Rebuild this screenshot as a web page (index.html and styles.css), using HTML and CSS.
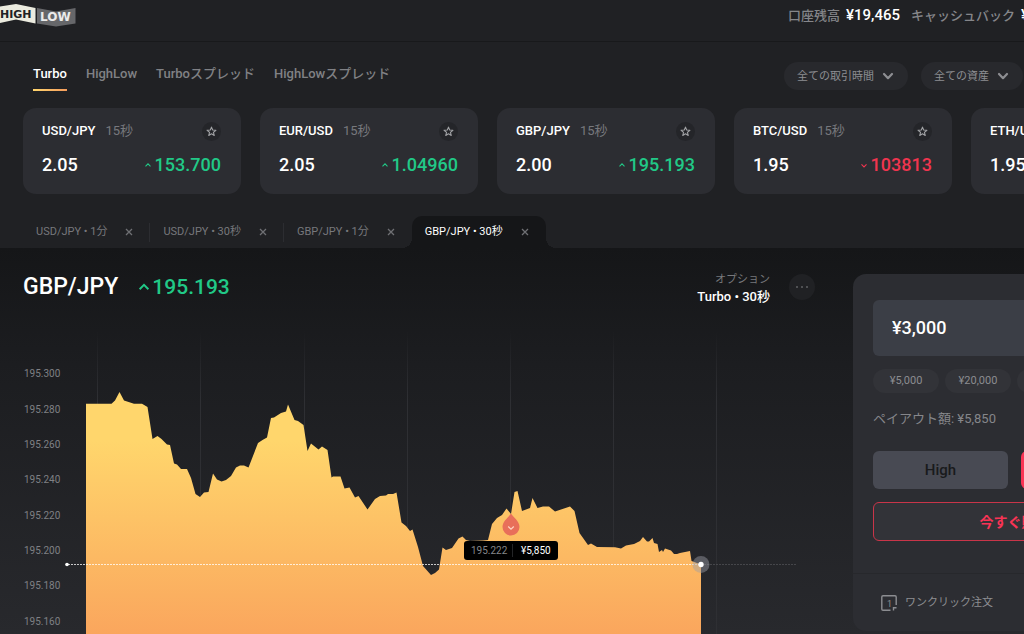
FILE: index.html
```html
<!DOCTYPE html>
<html lang="ja">
<head>
<meta charset="utf-8">
<meta name="viewport" content="width=device-width, initial-scale=1">
<title>HighLow</title>
<link rel="stylesheet" href="styles.css">
</head>
<body>
<svg class="sprite" aria-hidden="true">
  <symbol id="star" viewBox="0 0 12 12"><path d="M6 1.2 7.3 4.3 10.8 4.6 8.1 6.9 9 10.3 6 8.5 3 10.3 3.9 6.9 1.2 4.6 4.7 4.3Z" fill="none" stroke="currentColor" stroke-width="1.2" stroke-linejoin="round"/></symbol>
  <symbol id="up" viewBox="0 0 8 8"><path d="M1.5 5.3 4 2.8 6.5 5.3" fill="none" stroke="currentColor" stroke-width="1.1"/></symbol>
  <symbol id="down" viewBox="0 0 8 8"><path d="M1.5 3.4 4 5.9 6.5 3.4" fill="none" stroke="currentColor" stroke-width="1.1"/></symbol>
  <symbol id="close" viewBox="0 0 8 8"><path d="M1 1 7 7M7 1 1 7" fill="none" stroke="currentColor" stroke-width="1.3"/></symbol>
  <symbol id="chevron" viewBox="0 0 12 12"><path d="M2 4 6 8.2 10 4" fill="none" stroke="currentColor" stroke-width="2.2" stroke-linecap="round" stroke-linejoin="round"/></symbol>
</svg>
<div class="page">
  <header class="topbar">
    <a class="logo" href="#" aria-label="HighLow">
      <svg width="76" height="32" viewBox="0 0 76 32">
        <path d="M0 6.5 16 4 35.500 8V23.500L16 19.500 0 23Z" fill="#ebebdf"/>
        <path d="M37 8 56 11.500 75.500 8V23.500L56 26.500 37 23.500Z" fill="#66676a"/>
        <text class="logo-high" x="0" y="18">HIGH</text>
        <text class="logo-low" x="40" y="21">LOW</text>
      </svg>
    </a>
    <dl class="balances">
      <div><dt>口座残高</dt><dd>¥19,465</dd></div>
      <div><dt>キャッシュバック</dt><dd>¥0</dd></div>
    </dl>
  </header>

  <div class="toolbar">
    <nav class="modes">
      <a class="mode active" href="#">Turbo</a>
      <a class="mode" href="#">HighLow</a>
      <a class="mode" href="#">Turboスプレッド</a>
      <a class="mode" href="#">HighLowスプレッド</a>
    </nav>
    <div class="filters">
      <div class="filter"><select aria-label="取引時間"><option>全ての取引時間</option></select><svg><use href="#chevron"/></svg></div>
      <div class="filter"><select aria-label="資産"><option>全ての資産</option></select><svg><use href="#chevron"/></svg></div>
    </div>
  </div>

  <section class="cards">
    <article class="card">
      <div class="row"><h2>USD/JPY</h2><span class="term">15秒</span><button class="fav" aria-label="お気に入り"><svg><use href="#star"/></svg></button></div>
      <div class="row"><span class="payout">2.05</span><span class="rate rise"><svg><use href="#up"/></svg>153.700</span></div>
    </article>
    <article class="card">
      <div class="row"><h2>EUR/USD</h2><span class="term">15秒</span><button class="fav" aria-label="お気に入り"><svg><use href="#star"/></svg></button></div>
      <div class="row"><span class="payout">2.05</span><span class="rate rise"><svg><use href="#up"/></svg>1.04960</span></div>
    </article>
    <article class="card">
      <div class="row"><h2>GBP/JPY</h2><span class="term">15秒</span><button class="fav" aria-label="お気に入り"><svg><use href="#star"/></svg></button></div>
      <div class="row"><span class="payout">2.00</span><span class="rate rise"><svg><use href="#up"/></svg>195.193</span></div>
    </article>
    <article class="card">
      <div class="row"><h2>BTC/USD</h2><span class="term">15秒</span><button class="fav" aria-label="お気に入り"><svg><use href="#star"/></svg></button></div>
      <div class="row"><span class="payout">1.95</span><span class="rate fall"><svg><use href="#down"/></svg>103813</span></div>
    </article>
    <article class="card">
      <div class="row"><h2>ETH/USD</h2></div>
      <div class="row"><span class="payout">1.95</span></div>
    </article>
  </section>

  <div class="tabs">
    <div class="tab"><a href="#">USD/JPY • 1分</a><button aria-label="閉じる"><svg><use href="#close"/></svg></button></div>
    <div class="tab"><a href="#">USD/JPY • 30秒</a><button aria-label="閉じる"><svg><use href="#close"/></svg></button></div>
    <div class="tab last"><a href="#">GBP/JPY • 1分</a><button aria-label="閉じる"><svg><use href="#close"/></svg></button></div>
    <div class="tab current"><a href="#">GBP/JPY • 30秒</a><button aria-label="閉じる"><svg><use href="#close"/></svg></button></div>
  </div>

  <main class="trade">
    <section class="market">
      <div class="market-head">
        <h1>GBP/JPY</h1>
        <span class="price"><svg><use href="#up"/></svg>195.193</span>
        <div class="option"><span>オプション</span><strong>Turbo • 30秒</strong></div>
        <button class="more" aria-label="その他"><svg viewBox="0 0 14 4"><circle cx="2" cy="2" r=".8"/><circle cx="7" cy="2" r=".8"/><circle cx="12" cy="2" r=".8"/></svg></button>
      </div>
      <svg class="chart" width="830" height="324" viewBox="0 310 830 324" role="img" aria-label="GBP/JPY">
        <defs>
          <linearGradient id="area" gradientUnits="userSpaceOnUse" x1="0" y1="440" x2="0" y2="634"><stop offset="0" stop-color="#ffd66c"/><stop offset="1" stop-color="#faa65d"/></linearGradient>
          <linearGradient id="grid" gradientUnits="userSpaceOnUse" x1="0" y1="330" x2="0" y2="400"><stop offset="0" stop-color="#2e2f33" stop-opacity="0"/><stop offset="1" stop-color="#2e2f33"/></linearGradient>
        </defs>
        <g fill="url(#grid)">
          <rect x="97" y="330" width="1" height="304"/><rect x="200" y="330" width="1" height="304"/><rect x="304" y="330" width="1" height="304"/><rect x="407" y="330" width="1" height="304"/><rect x="510" y="330" width="1" height="304"/><rect x="613" y="330" width="1" height="304"/><rect x="716" y="330" width="1" height="304"/>
        </g>
        <g class="axis">
          <text x="24" y="377">195.300</text><text x="24" y="413">195.280</text><text x="24" y="448">195.260</text><text x="24" y="483">195.240</text><text x="24" y="519">195.220</text><text x="24" y="554">195.200</text><text x="24" y="589">195.180</text><text x="24" y="625">195.160</text>
        </g>
        <path fill="url(#area)" d="M86 634V403.700H111.500L115 400.500 119.500 392 124 400.500 134 403.700H142L147.500 407 152.500 439 157.500 436 161.500 439 167 444.500 170 445 174 463.500 177 464.500 181 469H187L191 478 195.500 494 200 497 204 492.500 208.500 492 213 473.500 217 479.500 221.500 481.500 226 480 231 476 236 467.500 240 465.500H244L248.500 467.500 258 443 262.500 440 267 437.500 271 418 274 417.500 281 413 286 411.500 288 404.500 294.500 420 298 421 303.500 425 307.500 451 311 443.500 318.500 449.500 322 446.500 327.500 450 331.500 477.500 333 476.500H340.500L344.500 488.500 349.500 487.500 355 497.500 358.500 496 367.500 509.500 375 499 380 496 386 495.500 388 494H393L396.500 492.500 401.500 522.500 406 526 410 531 412.500 529.500 418 547 423 566 431 575 435 573 439 569.500 442.500 547.500 446 550 452 548 458.500 538.500 462.500 536.500 466 540 470 541 483 540.500 488 540 492 524 497 518 502 515 506.500 508.500 511 514 514.500 492 517.500 491 522 511 530 508 532.500 498 537.500 508 543 506.500H549L555 511.500 570 506.500 574.500 511 579.500 533 588 545 591 543.500 597 547 615 547.200 621 548.500 626 545.500 634 544 640 541 643 537 647 541.500H649L652.500 538 654 543 657.500 544 659 552 662 550 663 552 665 548.500 671 550.500 674 554 677 554 680 553 690 551 691.500 561 701 564.500V634Z"/>
        <path d="M68 564.500H701" stroke="#fff" stroke-opacity=".75" stroke-dasharray="2 1"/>
        <path d="M701 564.500H797" stroke="#5b5c60" stroke-opacity=".6" stroke-dasharray="2 1"/>
        <circle cx="67" cy="564.500" r="1.800" fill="#fff"/>
        <circle cx="701" cy="564.500" r="8.500" fill="#9da0a8" fill-opacity=".45"/>
        <circle cx="701" cy="564.500" r="2.700" fill="#fff"/>
        <path d="M511 513.500C513.500 517.500 519.500 521 519.500 527A8.500 8.500 0 0 1 502.500 527C502.500 521 508.500 517.500 511 513.500Z" fill="#e86f5a"/>
        <path d="M508.200 526.500 511 529.200 513.800 526.500" fill="none" stroke="#ffd3c4" stroke-width="1.200"/>
        <rect x="464" y="541" width="94" height="19" rx="3" fill="#000"/>
        <path d="M512.500 544V557" stroke="#242527"/>
        <g class="tip"><text x="471" y="554">195.222</text><text class="tip-value" x="521" y="554">¥5,850</text></g>
      </svg>
    </section>

    <aside class="ticket">
      <div class="ticket-body">
        <input class="amount" type="text" value="¥3,000" aria-label="金額">
        <div class="chips"><button>¥5,000</button><button>¥20,000</button><button>¥50,000</button></div>
        <p class="return">ペイアウト額: ¥5,850</p>
        <div class="sides"><button class="high">High</button><button class="low">Low</button></div>
        <button class="buy">今すぐ購入</button>
      </div>
      <div class="ticket-foot">
        <svg viewBox="0 0 18 18"><path d="M10.500 16.200H3A1.200 1.200 0 0 1 1.800 15V3A1.200 1.200 0 0 1 3 1.800H15A1.200 1.200 0 0 1 16.200 3V11M13.500 16.500V13.800H16.500" fill="none" stroke="currentColor" stroke-width="1.400"/><text x="7" y="12.500">1</text></svg>
        <span>ワンクリック注文</span>
      </div>
    </aside>
  </main>
</div>
</body>
</html>
```
FILE: styles.css
```css
* { box-sizing: border-box; }
body {
  margin: 0;
  overflow: hidden;
  background: #202124;
  color: #fff;
  font: 13px/20px Roboto, "Noto Sans CJK JP", sans-serif;
}
button, input, select { font: inherit; color: inherit; border: 0; background: none; padding: 0; margin: 0; }
a { color: inherit; text-decoration: none; }
h1, h2, p, dl, dd { margin: 0; font-weight: 500; }
.sprite { display: none; }
.page { display: flex; flex-direction: column; min-width: 1198px; min-height: 100vh; }

.topbar { display: flex; justify-content: space-between; height: 42px; border-bottom: 1px solid #18191b; }
.logo { display: block; }
.logo text { font-family: "DejaVu Sans", sans-serif; font-weight: 700; }
.logo-high { font-size: 11px; fill: #202124; }
.logo-low { font-size: 12px; fill: #ebebeb; }
.balances { display: flex; flex: 0 0 410px; gap: 11px; padding-top: 5px; }
.balances div { display: flex; gap: 6px; white-space: nowrap; }
.balances dt { padding-top: 1px; color: #85868a; }
.balances dd { font-size: 15px; }

.toolbar { display: flex; justify-content: space-between; padding: 20px 0 18px 33px; height: 66px; }
.modes { display: flex; gap: 19px; }
.mode { height: 29px; padding-top: 2px; color: #808185; font-weight: 500; }
.mode.active { color: #fff; border-bottom: 2px solid; border-image: linear-gradient(90deg, #ffd76e, #f49a5b) 1; }
.filters { display: flex; flex: 0 0 414px; gap: 13px; }
.filter { display: grid; height: 28px; border-radius: 14px; background: #28292d; color: #8d8e92; }
.filter select { grid-area: 1 / 1; appearance: none; padding: 1px 34px 0 13px; font-size: 11px; }
.filter svg { grid-area: 1 / 1; place-self: center end; width: 12px; height: 12px; margin-right: 14px; pointer-events: none; }

.cards { display: flex; gap: 19px; padding-left: 23px; }
.card { flex: 0 0 218px; height: 86px; padding: 13px 20px 12px 19px; border-radius: 13px; background: #2c2d32; }
.row { display: flex; align-items: center; gap: 10px; height: 20px; }
.row + .row { margin-top: 14px; }
.card h2 { font-size: 13px; }
.term { color: #77787d; }
.fav { display: grid; place-items: center; width: 19px; height: 19px; margin-left: auto; border-radius: 50%; background: #242529; color: #a0a1a4; }
.fav svg { width: 11px; height: 11px; }
.payout, .rate { font-size: 18px; font-weight: 500; }
.rate { display: flex; align-items: center; gap: 3px; margin-left: auto; }
.rate svg { width: 8px; height: 8px; }
.rise, .price { color: #21c987; }
.fall { color: #f0354f; }

.tabs { display: flex; height: 32px; margin-top: 22px; padding-left: 23px; }
.tab { display: flex; align-items: center; gap: 18px; padding: 0 17px 0 13px; color: #77787c; font-size: 11px; line-height: 32px; white-space: nowrap; background: linear-gradient(#2c2d31, #2c2d31) right center / 1px 19px no-repeat; }
.tab.last { background: none; }
.tab button { display: grid; place-items: center; width: 8px; height: 8px; color: #6f7074; }
.tab svg { width: 8px; height: 8px; }
.tab.current { position: relative; background: #151618; color: #fff; border-radius: 10px 10px 0 0; }
.tab.current::before, .tab.current::after { content: ""; position: absolute; bottom: 0; width: 10px; height: 10px; }
.tab.current::before { right: 100%; background: radial-gradient(circle at 0 0, transparent 10px, #151618 10px); }
.tab.current::after { left: 100%; background: radial-gradient(circle at 100% 0, transparent 10px, #151618 10px); }

.trade { display: flex; flex: 1; align-items: flex-start; gap: 23px; padding-right: 23px; background: linear-gradient(#151618, #1c1d20 30%, #28292d); }
.market { flex: 1; }
.market-head { display: flex; align-items: center; height: 62px; padding: 22px 15px 6px 23px; }
.market-head h1 { font-size: 23px; }
.price { display: flex; align-items: center; gap: 1px; margin-left: 19px; font-size: 21px; font-weight: 500; }
.price svg { width: 14px; height: 14px; }
.option { display: grid; margin-left: auto; text-align: right; line-height: 17px; }
.option span { padding-top: 1px; color: #77787c; font-size: 11px; }
.option strong { font-weight: 500; }
.more { display: grid; place-items: center; width: 26px; height: 26px; margin-left: 19px; border-radius: 50%; background: #202124; }
.more svg { width: 14px; height: 4px; fill: #8c8d90; }
.chart { display: block; }
.axis { fill: #7f8084; font-size: 10px; }
.tip { fill: #85868a; font-size: 10px; }
.tip-value { fill: #fff; }

.ticket { flex: 0 0 322px; margin-top: 26px; border-radius: 13px; background: #2c2d32; }
.ticket-body { display: flex; flex-direction: column; padding: 26px 19px 32px 20px; }
.amount { height: 56px; padding: 0 19px 2px; border-radius: 6px; background: #3b3e46; font-size: 18px; font-weight: 500; }
.chips { display: flex; gap: 6px; margin-top: 13px; }
.chips button { flex: 0 0 66px; height: 24px; border-radius: 12px; background: #323338; color: #8b8c90; font-size: 11px; }
.return { margin: 13px 0 19px; line-height: 26px; color: #85868a; font-weight: 400; }
.sides { display: flex; gap: 13px; }
.sides button { flex: 1; height: 38px; border-radius: 6px; font-size: 15px; font-weight: 500; }
.high { background: #484a53; color: #191a1c; }
.low { background: #f93455; }
.buy { height: 39px; margin-top: 13px; border: 1px solid #c93549; border-radius: 6px; background: #323338; color: #f93455; font-size: 14px; font-weight: 700; }
.ticket-foot { display: flex; align-items: center; gap: 7px; height: 58px; padding-left: 27px; border-top: 1px solid #27282c; color: #8c8d91; font-size: 11px; }
.ticket-foot svg { width: 18px; height: 18px; }
.ticket-foot text { fill: currentColor; font-size: 9px; }
```
